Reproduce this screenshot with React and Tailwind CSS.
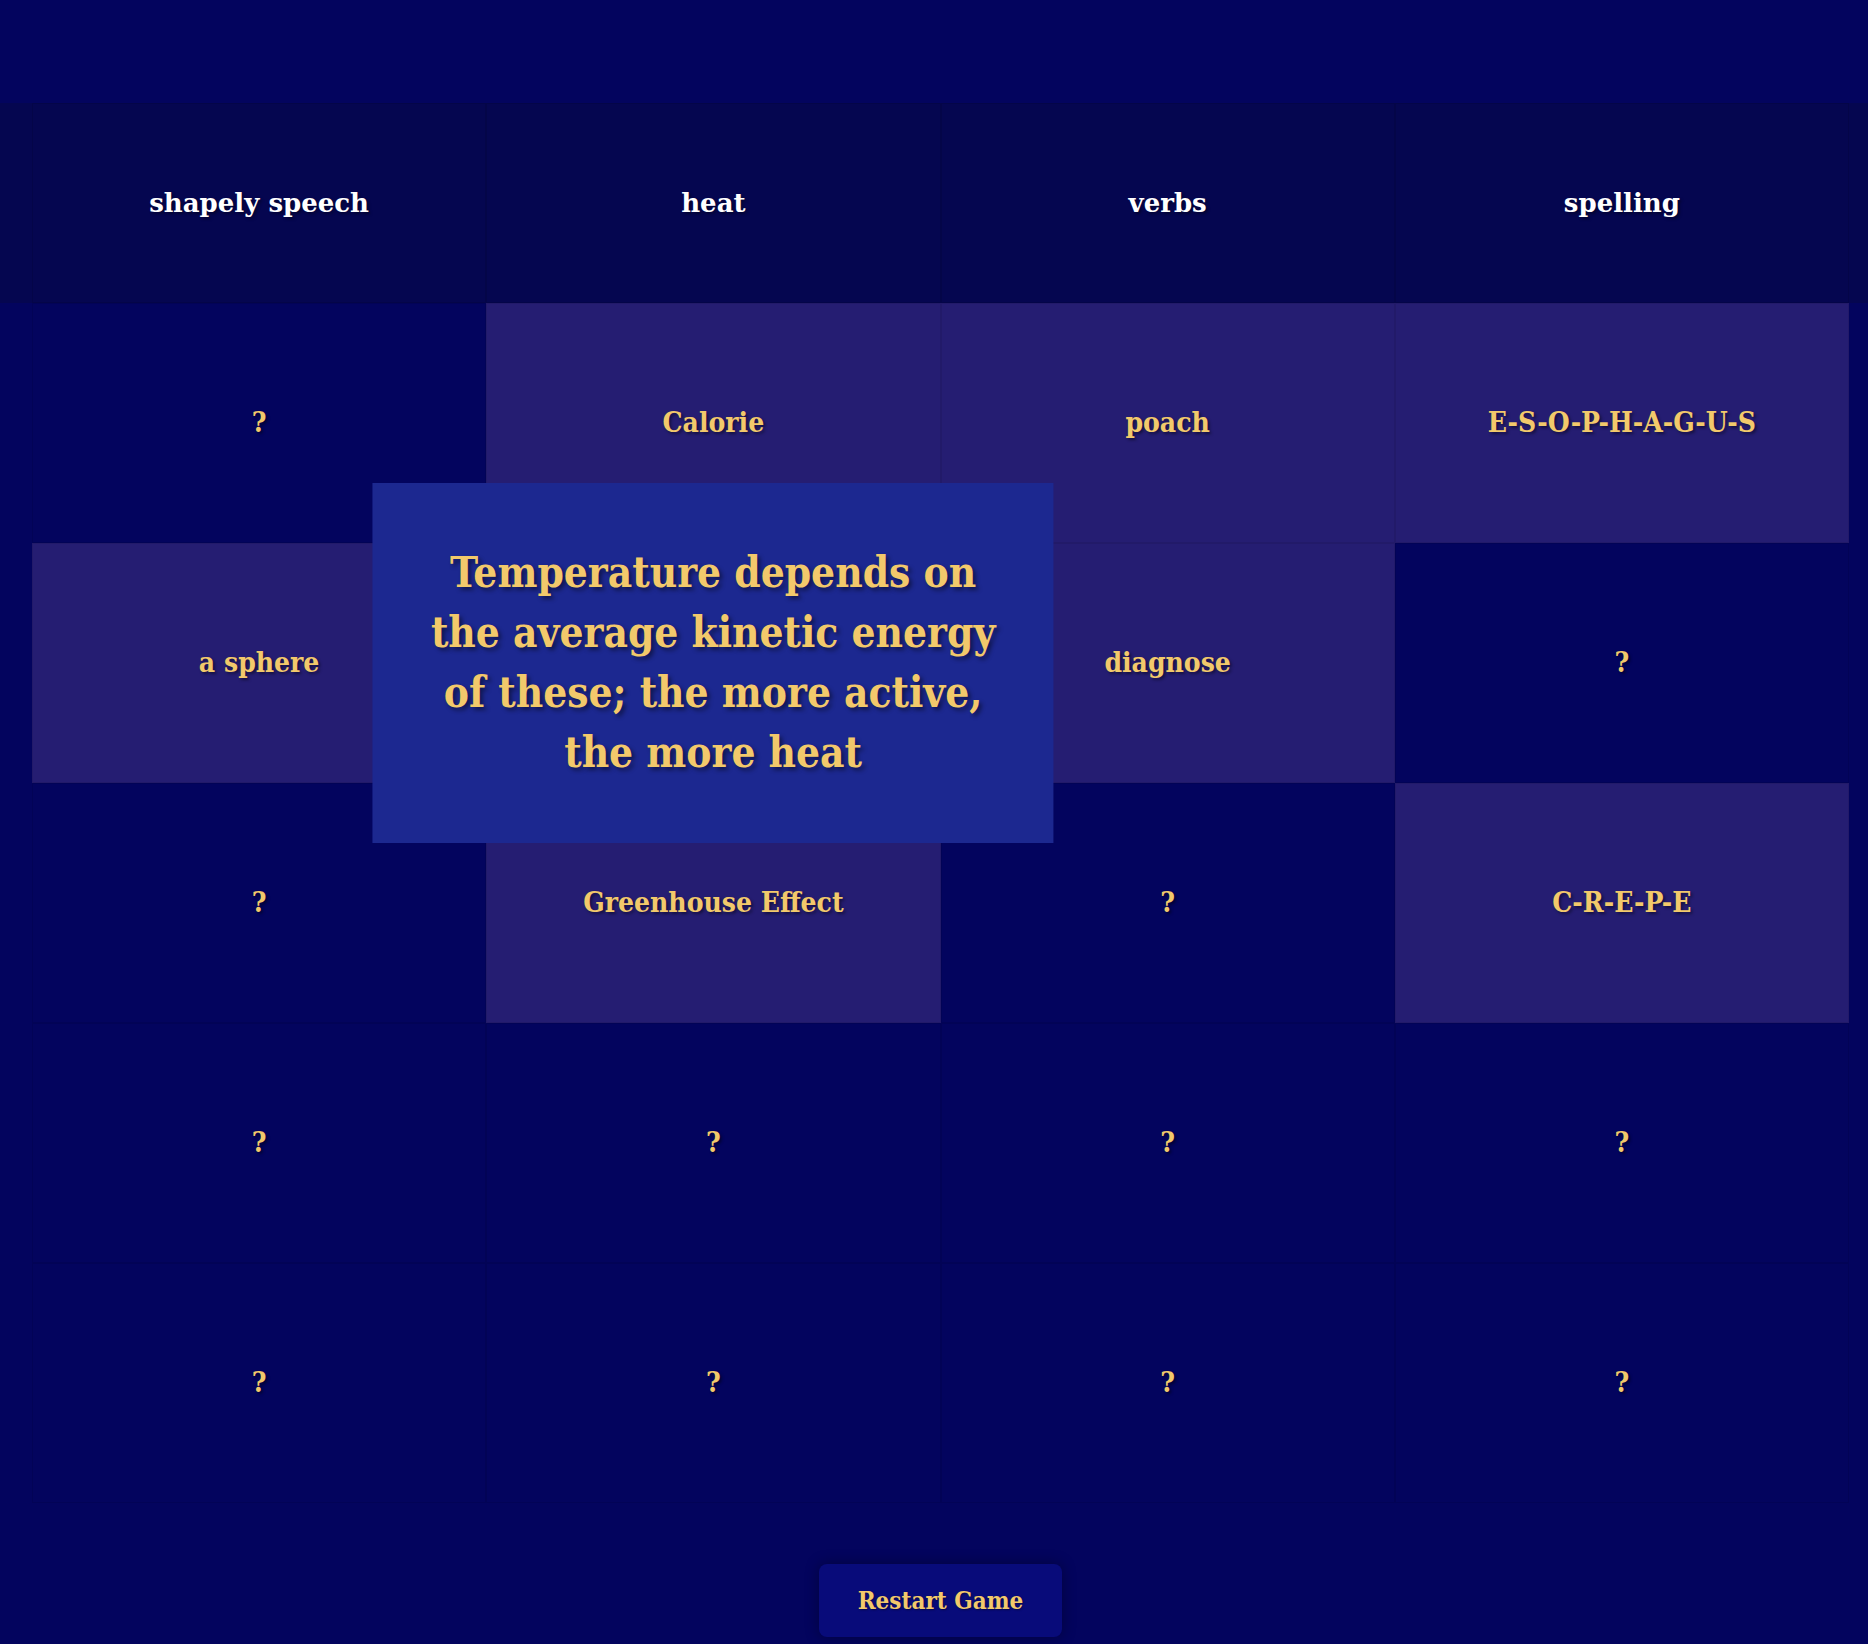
const categories = ['shapely speech', 'heat', 'verbs', 'spelling'];

const board = [
    [{ text: '?' }, { text: 'Calorie', done: true }, { text: 'poach', done: true }, { text: 'E-S-O-P-H-A-G-U-S', done: true }],
    [{ text: 'a sphere', done: true }, { active: true }, { text: 'diagnose', done: true }, { text: '?' }],
    [{ text: '?' }, { text: 'Greenhouse Effect', done: true }, { text: '?' }, { text: 'C-R-E-P-E', done: true }],
    [{ text: '?' }, { text: '?' }, { text: '?' }, { text: '?' }],
    [{ text: '?' }, { text: '?' }, { text: '?' }, { text: '?' }],
];

const slab = { fontFamily: '"DejaVu Serif Condensed", "DejaVu Serif", serif' };

const Cell = ({ cell }) => {
    if (cell.active) {
        return (
            <div className="relative z-10 h-[240px] scale-150 bg-[#1c2890] flex items-center justify-center px-6 text-center">
                <p className="text-[28px] leading-[40px] font-bold text-[#f2c96b] [text-shadow:2px_2px_3px_rgba(0,0,0,0.45)]">
                    Temperature depends on<br />
                    the average kinetic energy<br />
                    of these; the more active,<br />
                    the more heat
                </p>
            </div>
        );
    }

    return (
        <div
            className={`h-[240px] flex items-center justify-center border border-[#00000014] ${cell.done ? 'bg-[#251d72]' : 'bg-[#03045e]'
                }`}
        >
            <span className="text-[28px] font-bold text-[#f2c96b] [text-shadow:2px_2px_3px_rgba(0,0,0,0.45)]">
                {cell.text}
            </span>
        </div>
    );
};

export default function App() {
    return (
        <div className="min-h-[1644px] bg-[#03045e] pt-[103px]" style={slab}>
            {/* category header bar */}
            <div className="w-full bg-[#050650]">
                <div className="ml-[32px] w-[1817px] grid grid-cols-4">
                    {categories.map((cat) => (
                        <div
                            key={cat}
                            className="h-[200px] flex items-center justify-center border border-[#00000018]"
                        >
                            <span
                                className="text-[26px] font-bold text-white [text-shadow:2px_2px_3px_rgba(0,0,0,0.4)]"
                                style={{ fontFamily: '"DejaVu Serif", serif' }}
                            >
                                {cat}
                            </span>
                        </div>
                    ))}
                </div>
            </div>

            {/* clue board */}
            <div className="ml-[32px] w-[1817px] grid grid-cols-4">
                {board.map((row, r) =>
                    row.map((cell, c) => <Cell key={`${r}-${c}`} cell={cell} />)
                )}
            </div>

            <div className="ml-[32px] w-[1817px] flex justify-center mt-[61px]">
                <button className="w-[243px] h-[73px] rounded-lg bg-[#080b7a] text-[24px] font-bold text-[#f2c96b] shadow-[0_0_14px_rgba(0,0,0,0.35)] [text-shadow:1px_1px_2px_rgba(0,0,0,0.4)]">
                    Restart Game
                </button>
            </div>
        </div>
    );
}
